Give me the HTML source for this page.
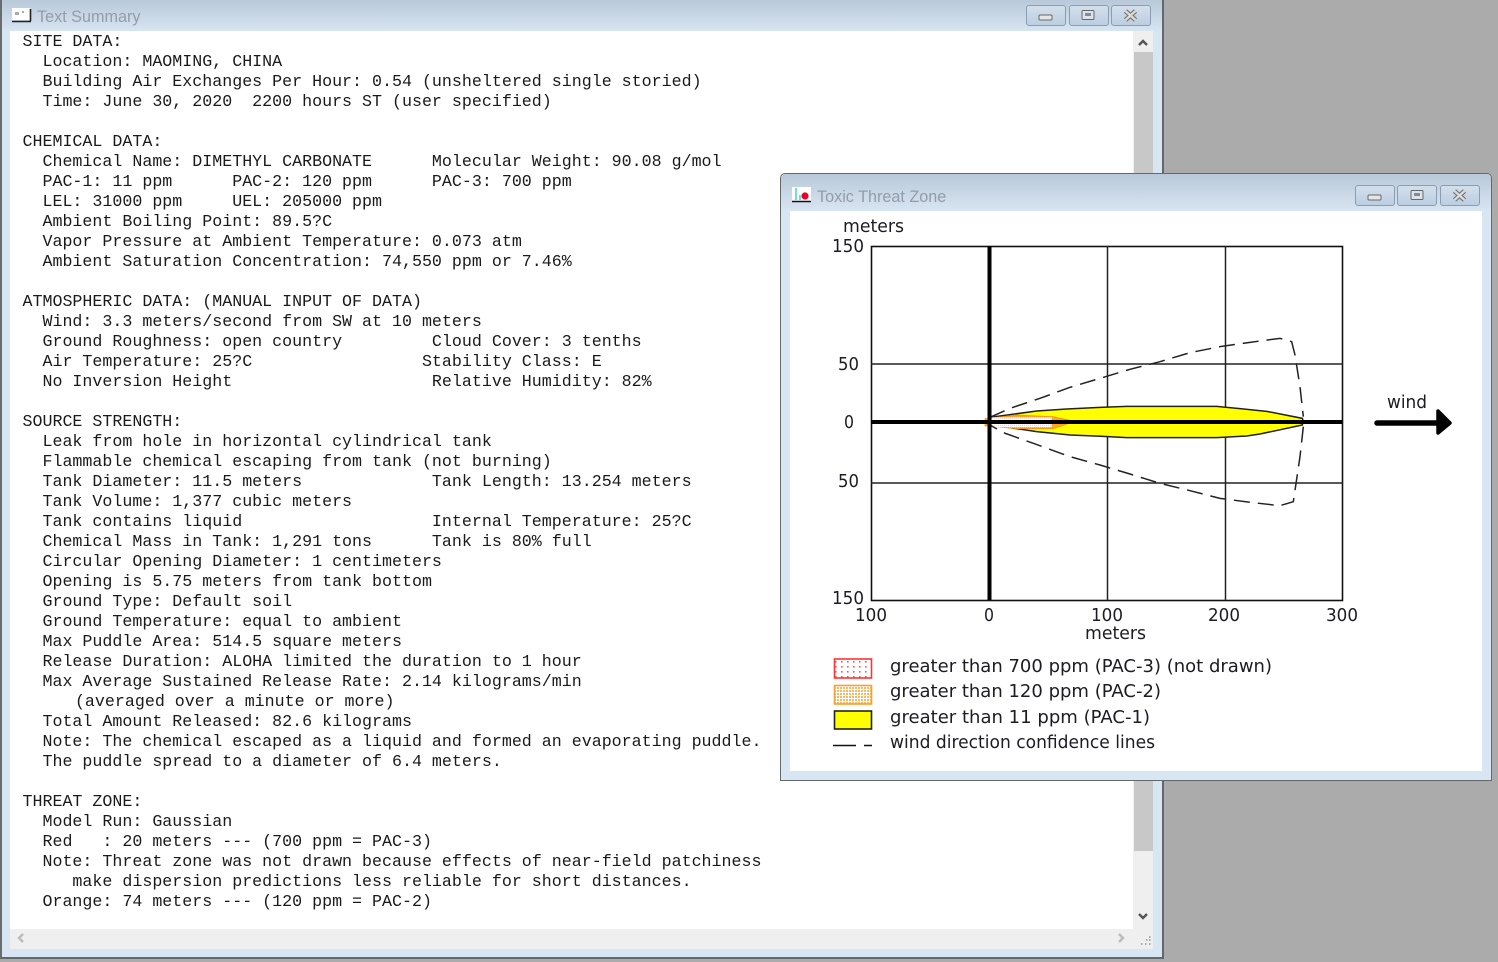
<!DOCTYPE html>
<html><head><meta charset="utf-8"><title>ALOHA</title>
<style>
html,body{margin:0;padding:0;width:1498px;height:962px;overflow:hidden;background:#ababab}
.a{position:absolute}
.win{position:absolute;box-sizing:border-box;background:#d8e5f2}
.tb{position:absolute;left:0;right:0;background:linear-gradient(#b9c9d9,#d7e4f2)}
.ttl{position:absolute;font:16.2px "Liberation Sans",sans-serif;color:#949da6;white-space:nowrap;filter:blur(.3px)}
pre{position:absolute;margin:0;font:16.65px/20px "Liberation Mono",monospace;color:#1a1a1a;filter:blur(.3px)}
.btn{position:absolute;box-sizing:border-box;height:21px;width:40px;border:1px solid #8a9db3;border-radius:3px;background:linear-gradient(#d3dfec,#bccee1)}
svg{position:absolute;left:0;top:0}
</style></head><body>

<div class="win" style="left:0;top:0;width:1164px;height:959px;border-left:2px solid #6a6d70;border-right:2px solid #65686b;border-bottom:2px solid #65686b">
<div class="tb" style="top:0;height:31px"></div>
</div>
<div class="a" style="left:10px;top:31px;width:1123px;height:898px;background:#fff"></div>
<div class="a" style="left:1133px;top:31px;width:20px;height:898px;background:#efefef"></div>
<div class="a" style="left:1134px;top:52px;width:19px;height:799px;background:#c8c8c8"></div>
<div class="a" style="left:10px;top:929px;width:1143px;height:20px;background:#efefef"></div>
<div class="ttl" style="left:37px;top:8px">Text Summary</div>
<div class="btn" style="left:1026px;top:5px"></div>
<div class="btn" style="left:1069px;top:5px"></div>
<div class="btn" style="left:1111px;top:5px"></div>

<pre style="left:22.5px;top:32px">SITE DATA:
  Location: MAOMING, CHINA
  Building Air Exchanges Per Hour: 0.54 (unsheltered single storied)
  Time: June 30, 2020  2200 hours ST (user specified)

CHEMICAL DATA:
  Chemical Name: DIMETHYL CARBONATE      Molecular Weight: 90.08 g/mol
  PAC-1: 11 ppm      PAC-2: 120 ppm      PAC-3: 700 ppm
  LEL: 31000 ppm     UEL: 205000 ppm
  Ambient Boiling Point: 89.5?C
  Vapor Pressure at Ambient Temperature: 0.073 atm
  Ambient Saturation Concentration: 74,550 ppm or 7.46%

ATMOSPHERIC DATA: (MANUAL INPUT OF DATA)
  Wind: 3.3 meters/second from SW at 10 meters
  Ground Roughness: open country         Cloud Cover: 3 tenths
  Air Temperature: 25?C                 Stability Class: E
  No Inversion Height                    Relative Humidity: 82%

SOURCE STRENGTH:
  Leak from hole in horizontal cylindrical tank
  Flammable chemical escaping from tank (not burning)
  Tank Diameter: 11.5 meters             Tank Length: 13.254 meters
  Tank Volume: 1,377 cubic meters
  Tank contains liquid                   Internal Temperature: 25?C
  Chemical Mass in Tank: 1,291 tons      Tank is 80% full
  Circular Opening Diameter: 1 centimeters
  Opening is 5.75 meters from tank bottom
  Ground Type: Default soil
  Ground Temperature: equal to ambient
  Max Puddle Area: 514.5 square meters
  Release Duration: ALOHA limited the duration to 1 hour
  Max Average Sustained Release Rate: 2.14 kilograms/min
     <span style="margin-left:2.5px">(averaged over a minute or more)</span>
  Total Amount Released: 82.6 kilograms
  Note: The chemical escaped as a liquid and formed an evaporating puddle.
  The puddle spread to a diameter of 6.4 meters.

THREAT ZONE:
  Model Run: Gaussian
  Red   : 20 meters --- (700 ppm = PAC-3)
  Note: Threat zone was not drawn because effects of near-field patchiness
     make dispersion predictions less reliable for short distances.
  Orange: 74 meters --- (120 ppm = PAC-2)</pre>

<svg width="1498" height="962" viewBox="0 0 1498 962" style="z-index:1">
 <!-- window 1 icon -->
 <rect x="12" y="8" width="18" height="12" fill="#fff"/>
 <path d="M12 21.5H31M30.5 9V21" stroke="#222" stroke-width="1.6" fill="none"/>
 <path d="M16 12v3M18 12v3M22 12h2" stroke="#555" stroke-width="1"/>
 <!-- win1 controls -->
 <rect x="1039" y="15" width="13" height="5" rx="1" fill="#e5e5e5" stroke="#666"/>
 <rect x="1082" y="10.5" width="12" height="9" rx="1" fill="#dfe3e8" stroke="#666"/><rect x="1085" y="13" width="6" height="3" fill="#7c8da3"/>
 <path d="M1125.5 11l10 9M1135.5 11l-10 9" stroke="#777" stroke-width="4.6"/><path d="M1125.5 11l10 9M1135.5 11l-10 9" stroke="#ddd" stroke-width="2.2"/>
 <!-- scroll arrows -->
 <path d="M1139 45l4-4 4 4" fill="none" stroke="#555" stroke-width="2.4"/>
 <path d="M1139 914l4 4 4-4" fill="none" stroke="#555" stroke-width="2.4"/>
 <path d="M23 934l-4 4 4 4" fill="none" stroke="#bbb" stroke-width="2.4"/>
 <path d="M1119 934l4 4-4 4" fill="none" stroke="#bbb" stroke-width="2.4"/>
 <path d="M1149 937h1.5M1146 940h1.5M1149 940h1.5M1141 944h1.5M1145 944h1.5M1149 944h1.5" stroke="#aaa" stroke-width="2"/>
</svg>

<div class="win" style="z-index:2;left:780px;top:173px;width:712px;height:608px;border:1.5px solid #65686b;border-top-left-radius:5px;border-top-right-radius:5px">
<div class="tb" style="top:0;height:36px;border-top-left-radius:4px;border-top-right-radius:4px"></div>
</div>
<div class="a" style="z-index:2;left:790px;top:211px;width:692px;height:560px;background:#fff"></div>
<div class="ttl" style="z-index:2;left:817px;top:188px">Toxic Threat Zone</div>
<div class="btn" style="z-index:2;left:1355px;top:185px"></div>
<div class="btn" style="z-index:2;left:1397px;top:185px"></div>
<div class="btn" style="z-index:2;left:1440px;top:185px"></div>

<svg width="1498" height="962" viewBox="0 0 1498 962" style="z-index:3;filter:blur(.3px)">
 <defs>
  <pattern id="r" width="6" height="5" patternUnits="userSpaceOnUse"><rect width="6" height="5" fill="#fff"/><rect x="1" y="1" width="1.6" height="1.6" fill="#f55"/></pattern>
  <pattern id="o" width="3" height="3" patternUnits="userSpaceOnUse"><rect width="3" height="3" fill="#fff"/><rect width="2" height="2" fill="#fbb765"/></pattern>
 </defs>
 <!-- win2 icon + controls -->
 <rect x="792" y="187" width="19" height="14" fill="#fff"/>
 <path d="M796 188v12M800 195v5" stroke="#3cd" stroke-width="1.4"/>
 <circle cx="805" cy="196" r="3.6" fill="#e8002a"/>
 <path d="M792 201.5h19" stroke="#111" stroke-width="1.4"/>
 <rect x="1368" y="195" width="13" height="5" rx="1" fill="#e5e5e5" stroke="#666"/>
 <rect x="1411" y="190.5" width="12" height="9" rx="1" fill="#dfe3e8" stroke="#666"/><rect x="1414" y="193" width="6" height="3" fill="#7c8da3"/>
 <path d="M1454.5 191l10 9M1464.5 191l-10 9" stroke="#777" stroke-width="4.6"/><path d="M1454.5 191l10 9M1464.5 191l-10 9" stroke="#ddd" stroke-width="2.2"/>

 <!-- plot -->
 <g stroke="#222" stroke-width="1.5" fill="none">
  <rect x="871.5" y="246.5" width="471" height="354" stroke="#111" stroke-width="1.6"/>
  <path d="M1107.5 246V600M1225.5 246V600M871 364H1343M871 483H1343"/>
 </g>
 <g transform="translate(960 330) scale(.33333)">
  <path d="M90 262L230 243 320 237 420 232 500 229 770 229 840 236 920 244 1027 265 1030 274 1027 285 900 312 860 318 770 323 500 323 430 319 330 315 230 305 130 290 90 285Z" fill="#ff0" stroke="#222" stroke-width="4.5"/>
  <path d="M75 266L170 255 280 260 345 274 280 296 170 296 75 288Z" fill="#ffa51f" stroke="#f09010" stroke-width="2"/>
  <rect x="95" y="262" width="180" height="30" fill="url(#r)"/>
  <path d="M90 262L150 235 240 205 330 172 420 145 510 118 600 95 690 68 780 50 870 37 960 25 995 35 1005 75 1020 170 1030 260M1030 290L1020 380 1000 515 960 527 870 517 780 505 690 482 600 460 510 432 420 405 330 380 220 340 130 308 90 285" fill="none" stroke="#222" stroke-width="4.5" stroke-dasharray="48 24"/>
 </g>
 <path d="M989.5 246V600" stroke="#000" stroke-width="4"/>
 <path d="M871 422H1342" stroke="#000" stroke-width="4"/>

 <!-- wind arrow -->
 <path d="M1377 423H1440" stroke="#000" stroke-width="5.5" stroke-linecap="round"/>
 <path d="M1438 411L1450 423 1438 433Z" fill="#000" stroke="#000" stroke-width="3.5" stroke-linejoin="round"/>

 <!-- legend -->
 <rect x="834.5" y="659" width="37" height="19" fill="url(#r)" stroke="#f33" stroke-width="1.6"/>
 <rect x="834.5" y="685.5" width="37" height="18.5" fill="url(#o)" stroke="#f9a030" stroke-width="1.6"/>
 <rect x="834.5" y="711" width="37" height="18" fill="#ff0" stroke="#222" stroke-width="1.6"/>
 <path d="M833 745.5h23M864 745.5h8" stroke="#111" stroke-width="1.4"/>

 <g font-family="'DejaVu Sans',sans-serif" font-size="17.5" fill="#1c1c24">
  <text x="843" y="232" textLength="61" lengthAdjust="spacingAndGlyphs">meters</text>
  <text x="832" y="252" textLength="32" lengthAdjust="spacingAndGlyphs">150</text>
  <text x="838" y="370" textLength="21" lengthAdjust="spacingAndGlyphs">50</text>
  <text x="844" y="428" textLength="10" lengthAdjust="spacingAndGlyphs">0</text>
  <text x="838" y="487" textLength="21" lengthAdjust="spacingAndGlyphs">50</text>
  <text x="832" y="604" textLength="32" lengthAdjust="spacingAndGlyphs">150</text>
  <text x="855" y="621" textLength="32" lengthAdjust="spacingAndGlyphs">100</text>
  <text x="984" y="621" textLength="10" lengthAdjust="spacingAndGlyphs">0</text>
  <text x="1091" y="621" textLength="32" lengthAdjust="spacingAndGlyphs">100</text>
  <text x="1208" y="621" textLength="32" lengthAdjust="spacingAndGlyphs">200</text>
  <text x="1326" y="621" textLength="32" lengthAdjust="spacingAndGlyphs">300</text>
  <text x="1085" y="639" textLength="61" lengthAdjust="spacingAndGlyphs">meters</text>
  <text x="1387" y="408" textLength="40" lengthAdjust="spacingAndGlyphs">wind</text>
  <text x="890" y="672" textLength="382" lengthAdjust="spacingAndGlyphs">greater than 700 ppm (PAC-3) (not drawn)</text>
  <text x="890" y="697" textLength="271" lengthAdjust="spacingAndGlyphs">greater than 120 ppm (PAC-2)</text>
  <text x="890" y="723" textLength="260" lengthAdjust="spacingAndGlyphs">greater than 11 ppm (PAC-1)</text>
  <text x="890" y="748" textLength="265" lengthAdjust="spacingAndGlyphs">wind direction confidence lines</text>
 </g>
</svg>
</body></html>
